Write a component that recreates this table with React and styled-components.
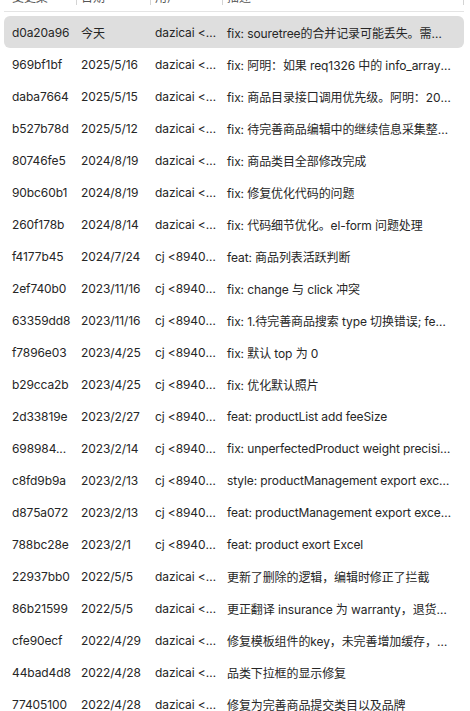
import React from 'react';
import styled, { createGlobalStyle } from 'styled-components';

const GlobalStyle = createGlobalStyle`
  html, body {
    margin: 0;
    padding: 0;
    background: #ffffff;
  }
  body {
    font-family: Inter, "Noto Sans CJK SC", sans-serif;
    font-size: 12px;
    letter-spacing: -0.1px;
    color: #262626;
    overflow: hidden;
  }
`;

const commits = [
  ['d0a20a96', '今天', 'dazicai <dazicai@163.com>', 'fix: souretree的合并记录可能丢失。需要重新提交一次'],
  ['969bf1bf', '2025/5/16', 'dazicai <dazicai@163.com>', 'fix: 阿明：如果 req1326 中的 info_array 为空则不展示'],
  ['daba7664', '2025/5/15', 'dazicai <dazicai@163.com>', 'fix: 商品目录接口调用优先级。阿明：2025/5/15'],
  ['b527b78d', '2025/5/12', 'dazicai <dazicai@163.com>', 'fix: 待完善商品编辑中的继续信息采集整理逻辑'],
  ['80746fe5', '2024/8/19', 'dazicai <dazicai@163.com>', 'fix: 商品类目全部修改完成'],
  ['90bc60b1', '2024/8/19', 'dazicai <dazicai@163.com>', 'fix: 修复优化代码的问题'],
  ['260f178b', '2024/8/14', 'dazicai <dazicai@163.com>', 'fix: 代码细节优化。el-form 问题处理'],
  ['f4177b45', '2024/7/24', 'cj <894036218@qq.com>', 'feat: 商品列表活跃判断'],
  ['2ef740b0', '2023/11/16', 'cj <894036218@qq.com>', 'fix: change 与 click 冲突'],
  ['63359dd8', '2023/11/16', 'cj <894036218@qq.com>', 'fix: 1.待完善商品搜索 type 切换错误; feat: 2.新增导出'],
  ['f7896e03', '2023/4/25', 'cj <894036218@qq.com>', 'fix: 默认 top 为 0'],
  ['b29cca2b', '2023/4/25', 'cj <894036218@qq.com>', 'fix: 优化默认照片'],
  ['2d33819e', '2023/2/27', 'cj <894036218@qq.com>', 'feat: productList add feeSize'],
  ['698984...', '2023/2/14', 'cj <894036218@qq.com>', 'fix: unperfectedProduct weight precision problem'],
  ['c8fd9b9a', '2023/2/13', 'cj <894036218@qq.com>', 'style: productManagement export excel format'],
  ['d875a072', '2023/2/13', 'cj <894036218@qq.com>', 'feat: productManagement export excel file'],
  ['788bc28e', '2023/2/1', 'cj <894036218@qq.com>', 'feat: product exort Excel'],
  ['22937bb0', '2022/5/5', 'dazicai <dazicai@163.com>', '更新了删除的逻辑，编辑时修正了拦截'],
  ['86b21599', '2022/5/5', 'dazicai <dazicai@163.com>', '更正翻译 insurance 为 warranty，退货管理页面调整'],
  ['cfe90ecf', '2022/4/29', 'dazicai <dazicai@163.com>', '修复模板组件的key，未完善增加缓存，优化列表'],
  ['44bad4d8', '2022/4/28', 'dazicai <dazicai@163.com>', '品类下拉框的显示修复'],
  ['77405100', '2022/4/28', 'dazicai <dazicai@163.com>', '修复为完善商品提交类目以及品牌'],
];

const columns = '73px 74px 72px 1fr';
const padRight = ['1px', '4px', '5px', '12px'];

const Table = styled.div`
  margin-top: -16px;
  width: 470px;
`;

const Header = styled.div`
  display: grid;
  grid-template-columns: ${columns};
  height: 28px;
  margin: 0 6px 4px 4px;
  border-bottom: 1px solid #e4e4e4;
  box-sizing: border-box;
  align-items: center;
  color: #555;
`;

const HeaderCell = styled.div`
  padding-left: ${(p) => (p.$first ? '8px' : '4px')};
  height: 14px;
  line-height: 14px;
  border-right: 1px solid #d4d4d4;
  white-space: nowrap;
  overflow: hidden;
`;

const Row = styled.div`
  display: grid;
  grid-template-columns: ${columns};
  height: 32px;
  margin: 0 6px 0 4px;
  align-items: center;
  border-radius: 6px;
  background: ${(p) => (p.$selected ? '#dedede' : 'transparent')};
`;

const Cell = styled.div`
  padding-left: ${(p) => (p.$col === 0 ? '8px' : '4px')};
  padding-right: ${(p) => padRight[p.$col]};
  white-space: nowrap;
  overflow: hidden;
  text-overflow: ellipsis;
`;

export default function App() {
  return (
    <>
      <GlobalStyle />
      <Table>
        <Header>
          <HeaderCell $first>变更集</HeaderCell>
          <HeaderCell>日期</HeaderCell>
          <HeaderCell>用户</HeaderCell>
          <HeaderCell>描述</HeaderCell>
        </Header>
        {commits.map((commit, i) => (
          <Row key={commit[0]} $selected={i === 0}>
            {commit.map((text, col) => (
              <Cell key={col} $col={col}>
                {text}
              </Cell>
            ))}
          </Row>
        ))}
      </Table>
    </>
  );
}
